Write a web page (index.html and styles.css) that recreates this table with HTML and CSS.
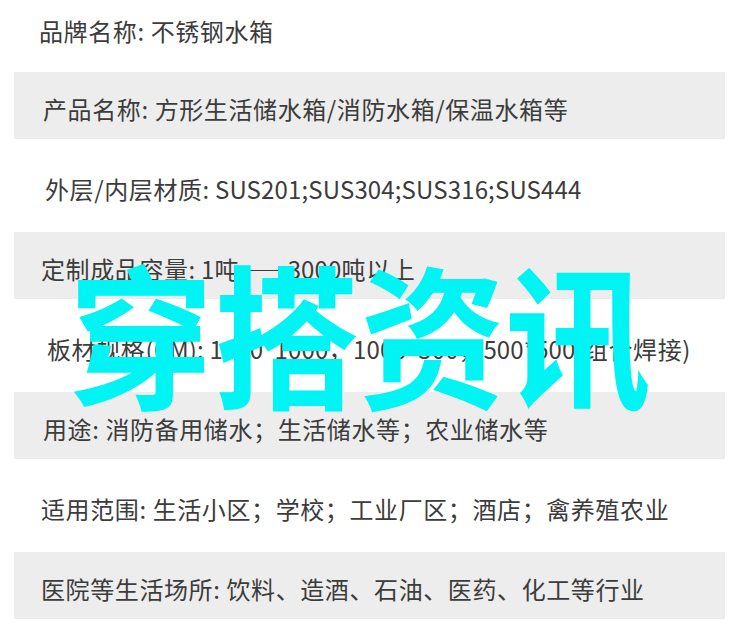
FILE: index.html
```html
<!DOCTYPE html>
<html lang="zh-CN">
<head>
  <meta charset="UTF-8">
  <title>不锈钢水箱 产品参数</title>
  <meta name="viewport" content="width=device-width, initial-scale=1.0" />
  <link rel="stylesheet" href="styles.css">
</head>
<body>

  <div class="spec-sheet">
    <ul class="spec-list">
      <li class="row row-first indent-sm">品牌名称: 不锈钢水箱</li>
      <li class="row shaded indent-md">产品名称: 方形生活储水箱/消防水箱/保温水箱等</li>
      <li class="row indent-lg">外层/内层材质<span class="latin">: SUS201;SUS304;SUS316;SUS444</span></li>
      <li class="row shaded">定制成品容量<span class="latin">: 1</span>吨——<span class="latin">3000</span>吨以上</li>
      <li class="row indent-xl">板材规格<span class="latin">(CM): 1000*1000</span>，<span class="latin">1000*500</span>，<span class="latin">500*500(</span>组合焊接)</li>
      <li class="row shaded indent-md">用途: 消防备用储水；生活储水等；农业储水等</li>
      <li class="row">适用范围: 生活小区；学校；工业厂区；酒店；禽养殖农业</li>
      <li class="row shaded">医院等生活场所: 饮料、造酒、石油、医药、化工等行业</li>
    </ul>

    <!-- 水印 -->
    <div class="watermark">穿搭资讯</div>
  </div>

</body>
</html>
```

FILE: styles.css
```css
* {
  box-sizing: border-box;
}

body {
  margin: 0;
  background-color: #fff;
  font-family: "Noto Sans CJK SC", "Noto Sans", sans-serif;
  color: #3c3c3c;
}

.spec-sheet {
  position: relative;
  width: 750px;
  height: 638px;
  overflow: hidden;
}

.spec-list {
  list-style: none;
  margin: 0;
  padding: 0;
}

.row {
  display: flex;
  align-items: center;
  height: 93px;
  margin: 0 25px 0 14px;
  padding: 5px 0 0 27px;
  font-size: 24px;
  letter-spacing: 0.6px;
  white-space: pre;
}

.row .latin {
  letter-spacing: 0.15px;
}

.row.shaded {
  height: 67px;
  background-color: #ededed;
}

.row.row-first {
  height: 72px;
  padding-top: 0;
  padding-bottom: 12px;
}

.indent-sm {
  padding-left: 25px;
}

.indent-md {
  padding-left: 29px;
}

.indent-lg {
  padding-left: 31px;
}

.indent-xl {
  padding-left: 33px;
}

.watermark {
  position: absolute;
  top: 252px;
  left: 68px;
  font-size: 155px;
  font-weight: 700;
  line-height: 1;
  color: #00f4f4;
  white-space: nowrap;
  transform: scaleX(0.94);
  transform-origin: left top;
}
```
